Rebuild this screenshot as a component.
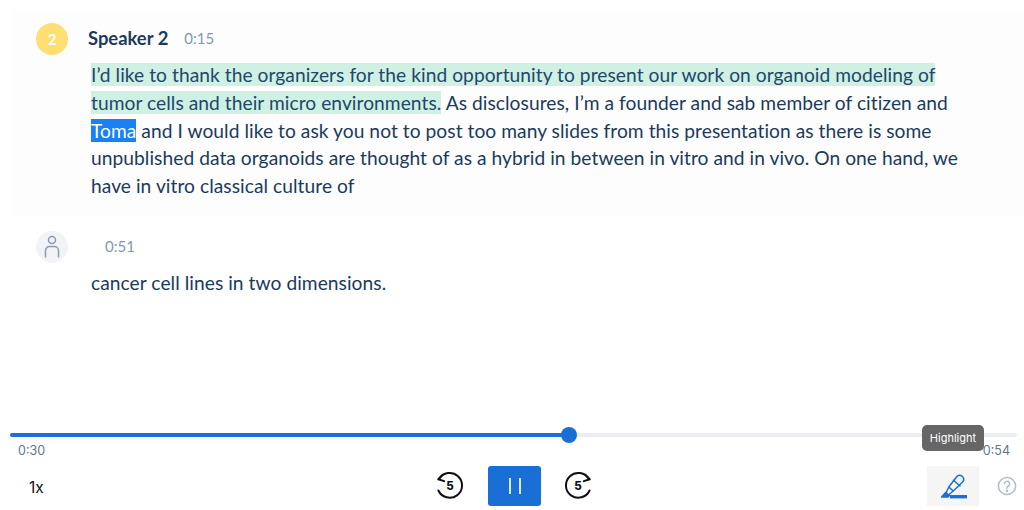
<script lang="ts">
  const highlighted = [
    "I’d like to thank the organizers for the kind opportunity to present our work on organoid modeling of",
    "tumor cells and their micro environments."
  ];
</script>

<div class="page">
  <section class="transcript">
    <article class="block active">
      <div class="head">
        <div class="avatar yellow">2</div>
        <span class="name">Speaker 2</span>
        <span class="time">0:15</span>
      </div>
      <p class="text">
        <mark>{highlighted[0]}</mark><br />
        <mark>{highlighted[1]}</mark> As disclosures, I’m a founder and sab member of citizen and<br />
        <span class="word">Toma</span> and I would like to ask you not to post too many slides from this presentation as there is some<br />
        unpublished data organoids are thought of as a hybrid in between in vitro and in vivo. On one hand, we<br />
        have in vitro classical culture of
      </p>
    </article>

    <article class="block second">
      <div class="head">
        <div class="avatar grey">
          <svg width="20" height="24" viewBox="0 0 20 24" fill="none" stroke="#8b9bb0" stroke-width="1.5">
            <circle cx="10" cy="5" r="3.5" />
            <path d="M3.5 22.5v-7a4 4 0 0 1 4-4h5a4 4 0 0 1 4 4v7" />
          </svg>
        </div>
        <span class="time unnamed">0:51</span>
      </div>
      <p class="text">cancer cell lines in two dimensions.</p>
    </article>
  </section>

  <section class="player">
    <div class="track">
      <div class="fill"></div>
      <div class="knob"></div>
    </div>
    <div class="times">
      <span>0:30</span>
      <span>0:54</span>
    </div>
    <div class="controls">
      <span class="speed">1x</span>
      <div class="center">
        <svg class="skip" width="30" height="30" viewBox="0 0 30 30" fill="none" stroke="#111" stroke-width="2">
          <path d="M4 8a12.4 12.4 0 1 1-.6 11.5" stroke-linecap="round" />
          <path d="M8 3.6 3.2 8.2l6 1.9" stroke-linejoin="round" stroke-linecap="round" />
          <text x="15" y="19">5</text>
        </svg>
        <button class="pause" aria-label="Pause">
          <span></span><span></span>
        </button>
        <svg class="skip" width="30" height="30" viewBox="0 0 30 30" fill="none" stroke="#111" stroke-width="2">
          <path d="M25 8a12.4 12.4 0 1 0 .6 11.5" stroke-linecap="round" />
          <path d="M21 3.6l4.8 4.6-6 1.9" stroke-linejoin="round" stroke-linecap="round" />
          <text x="14" y="19">5</text>
        </svg>
      </div>
      <div class="right">
        <button class="marker" aria-label="Highlight">
          <svg width="40" height="40" viewBox="0 0 40 40" fill="none" stroke="#1a6fd6" stroke-width="1.5" stroke-linejoin="round">
            <path d="M24.1 10.3a4 4 0 0 1 5.8 5.4L20.2 25l-4.4-4z" />
            <path d="M20.5 14.3 27 20" stroke-linecap="round" />
            <path d="M15.8 21 13 27l2.4 2 4.8-4" />
            <path d="M12.6 26.6 8.6 31h6.4l1.4-1.6z" fill="#1a6fd6" />
            <rect x="17" y="29" width="17" height="3.4" fill="#1a6fd6" stroke="none" />
          </svg>
        </button>
        <svg class="help" width="20" height="20" viewBox="0 0 20 20" fill="none" stroke="#b4bcc6" stroke-width="1.5">
          <circle cx="10" cy="10" r="8.6" />
          <path d="M7.4 7.8a2.6 2.6 0 1 1 4 2.2c-.9.6-1.4 1-1.4 2.2" stroke-linecap="round" />
          <circle cx="10" cy="14.8" r=".6" fill="#b4bcc6" />
        </svg>
        <div class="tooltip">Highlight</div>
      </div>
    </div>
  </section>
</div>

<style>
  :global(body) {
    margin: 0;
    background: #fff;
  }

  .page {
    width: 1024px;
    height: 510px;
    display: flex;
    flex-direction: column;
    justify-content: space-between;
    font-family: Lato, "Liberation Sans", sans-serif;
    color: #1d3557;
    overflow: hidden;
  }

  .transcript {
    padding: 10px 0 0 12px;
  }

  .block {
    padding: 13px 24px 0;
  }

  .active {
    height: 192px;
    background: #fdfdfe;
  }

  .second {
    padding-top: 16px;
  }

  .head {
    display: flex;
    align-items: center;
    height: 32px;
  }

  .avatar {
    width: 32px;
    height: 32px;
    border-radius: 50%;
    display: flex;
    align-items: center;
    justify-content: center;
    flex-shrink: 0;
  }

  .yellow {
    background: #ffdf72;
    color: #fff;
    font-size: 15px;
    font-weight: 700;
  }

  .grey {
    background: #f1f3f6;
  }

  .name {
    margin-left: 20px;
    padding-bottom: 3px;
    font-size: 18.4px;
    font-weight: 700;
    color: #1b3a5c;
  }

  .time {
    margin-left: 16px;
    padding-bottom: 3px;
    font-size: 15px;
    color: #8497ad;
  }

  .unnamed {
    margin-left: 37px;
  }

  .text {
    margin: 6px 0 0 55px;
    font-size: 19.2px;
    letter-spacing: 0.05px;
    line-height: 27.8px;
    white-space: nowrap;
    color: #1b3a5c;
  }

  .second .text {
    margin-top: 6px;
  }

  mark {
    background: #cff1e3;
    color: #24466a;
  }

  .word {
    background: #1a80f5;
    color: #fff;
  }

  .player {
    padding: 0 7px 4px 10px;
  }

  .track {
    position: relative;
    height: 4px;
    background: #ecedf2;
    border-radius: 2px;
  }

  .fill {
    width: 559px;
    height: 4px;
    background: #1a6fd6;
    border-radius: 2px;
  }

  .knob {
    position: absolute;
    left: 551px;
    top: -6px;
    width: 16px;
    height: 16px;
    border-radius: 50%;
    background: #1a6fd6;
  }

  .times {
    display: flex;
    justify-content: space-between;
    padding: 6px 7px 0 8px;
    font-family: Inter, sans-serif;
    font-size: 12.5px;
    line-height: 16px;
    color: #5f7690;
  }

  .controls {
    position: relative;
    display: flex;
    align-items: center;
    justify-content: space-between;
    height: 40px;
    margin-top: 7px;
  }

  .speed {
    margin-left: 19px;
    padding-top: 2px;
    font-family: Inter, sans-serif;
    font-size: 15.5px;
    color: #111;
  }

  .center {
    position: absolute;
    left: 425px;
    top: 0;
    height: 40px;
    display: flex;
    align-items: center;
    gap: 23px;
  }

  .skip text {
    font-family: Inter, sans-serif;
    font-size: 11.5px;
    font-weight: 800;
    fill: #111;
    stroke: none;
    text-anchor: middle;
  }

  .pause {
    all: unset;
    width: 53px;
    height: 40px;
    border-radius: 3px;
    background: #1a6fd6;
    display: flex;
    align-items: center;
    justify-content: center;
    gap: 8px;
  }

  .pause span {
    width: 2px;
    height: 16px;
    background: #dbe9fa;
  }

  .right {
    position: relative;
    display: flex;
    align-items: center;
    gap: 18px;
  }

  .marker {
    all: unset;
    width: 52px;
    height: 40px;
    background: #f5f5f5;
    display: flex;
    align-items: center;
    justify-content: center;
  }

  .tooltip {
    position: absolute;
    left: -5px;
    top: -41px;
    width: 62px;
    height: 26px;
    border-radius: 5px;
    background: #666;
    color: #fff;
    font-family: Inter, sans-serif;
    font-size: 11px;
    display: flex;
    align-items: center;
    justify-content: center;
  }
</style>
